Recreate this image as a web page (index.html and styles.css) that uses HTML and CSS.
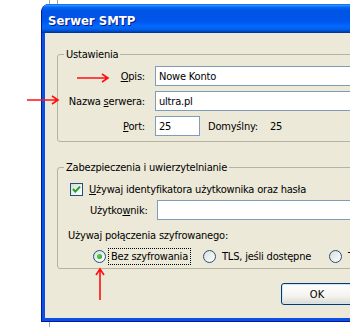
FILE: index.html
```html
<!DOCTYPE html>
<html lang="pl">
<head>
    <meta charset="UTF-8">
    <title>Serwer SMTP</title>
    <link rel="stylesheet" href="styles.css">
</head>
<body>
    <div class="backdrop-top"><div class="strip"></div></div>

    <div class="window">
        <div class="titlebar"><span class="title">Serwer SMTP</span></div>
        <div class="client">
            <fieldset class="group">
                <legend>Ustawienia</legend>
                <div class="row">
                    <label class="field-label"><u>O</u>pis:</label>
                    <input class="text-input" type="text" value="Nowe Konto">
                </div>
                <div class="row">
                    <label class="field-label">Nazwa <u>s</u>erwera:</label>
                    <input class="text-input" type="text" value="ultra.pl">
                </div>
                <div class="row">
                    <label class="field-label"><u>P</u>ort:</label>
                    <input class="text-input port" type="text" value="25">
                    <span class="default-label">Domyślny:</span>
                    <span>25</span>
                </div>
            </fieldset>

            <fieldset class="group security">
                <legend>Zabezpieczenia i uwierzytelnianie</legend>
                <div class="check-row">
                    <span class="checkbox">
                        <svg width="11" height="11" viewBox="0 0 11 11"><path d="M2 5 L4.3 7.6 L9 2.6" fill="none" stroke="#21a121" stroke-width="2"/></svg>
                    </span>
                    <span><u>U</u>żywaj identyfikatora użytkownika oraz hasła</span>
                </div>
                <div class="user-row">
                    <label class="user-label">Użytko<u>w</u>nik:</label>
                    <input class="text-input" type="text" value="">
                </div>
                <div class="enc-label">Używaj połączenia szyfrowanego:</div>
                <div class="radio-row">
                    <span class="radio checked"></span>
                    <span class="focus">Bez szyfrowania</span>
                    <span class="radio second"></span>
                    <span>TLS, jeśli dostępne</span>
                    <span class="radio third"></span>
                    <span>TLS</span>
                </div>
            </fieldset>

            <div class="actions">
                <button class="btn" type="button">OK</button>
            </div>
        </div>
    </div>

    <div class="backdrop-bottom"></div>

    <svg class="arrows" width="350" height="327" viewBox="0 0 350 327">
        <g fill="none" stroke="#ff1010" stroke-width="1.6">
            <path d="M77 78 H108 M102 74 L108 78 L102 82"/>
            <path d="M27 100 H58 M52 96 L58 100 L52 104"/>
            <path d="M100 300 V269 M96 275 L100 269 L104 275"/>
        </g>
    </svg>
</body>
</html>
```

FILE: styles.css
```css
body {
    margin: 0;
    width: 350px;
    height: 327px;
    overflow: hidden;
    position: relative;
    background: #fff;
    font-family: "DejaVu Sans Condensed", "Liberation Sans", sans-serif;
    font-size: 11px;
    letter-spacing: -0.2px;
    color: #000;
}
u {
    text-decoration: underline;
    text-underline-offset: 1px;
}
.backdrop-top {
    height: 4px;
}
.backdrop-top .strip {
    margin-left: 49px;
    width: 7px;
    height: 4px;
    border-left: 1px solid #9aa3b0;
    border-right: 1px solid #9aa3b0;
}
.backdrop-bottom {
    margin-left: 49px;
    height: 6px;
    border-left: 1px solid #9aa3b0;
}
.window {
    margin-left: 41px;
    width: 420px;
    background: #0b4fe3;
    border-left: 1px solid #0019a0;
    border-bottom: 1px solid #0019a0;
    border-radius: 8px 8px 0 0;
}
.titlebar {
    height: 29px;
    display: flex;
    align-items: center;
    padding-left: 6px;
    border-radius: 7px 7px 0 0;
    background: linear-gradient(to bottom, #0058ee 0%, #3593ff 4%, #288eff 6%, #127dff 8%, #036ffc 10%, #0262ee 14%, #0057e5 20%, #0054e3 24%, #0055eb 56%, #005bf5 66%, #026afe 76%, #0062ef 86%, #0052d6 92%, #0040ab 96%, #003092 100%);
}
.title {
    color: #fff;
    font-weight: bold;
    font-size: 13px;
    letter-spacing: 0;
    text-shadow: 1px 1px #0a1883;
    padding-top: 4px;
}
.client {
    margin: 0 0 3px 3px;
    height: 285px;
    box-sizing: border-box;
    padding: 15px 0 0 12px;
    background: #ece9d8;
}
.group {
    margin: 0;
    padding: 5px 10px 5px 6px;
    border: 1px solid #b4b2a2;
    border-radius: 3px;
}
.group legend {
    padding: 0 2px;
    line-height: 13px;
}
.row {
    display: flex;
    align-items: center;
    height: 20px;
    margin-bottom: 5px;
}
.row:last-child {
    margin-bottom: 0;
}
.field-label {
    width: 81px;
    text-align: right;
    margin-right: 10px;
}
.text-input {
    flex: 1;
    height: 20px;
    box-sizing: border-box;
    border: 1px solid #7f9db9;
    padding: 0 3px;
    font: inherit;
    letter-spacing: inherit;
    background: #fff;
    outline: none;
}
.text-input.port {
    flex: none;
    width: 45px;
}
.default-label {
    width: 62px;
    margin-left: 8px;
}
.security {
    margin-top: 19px;
    padding: 7px 10px 4px 6px;
}
.check-row {
    display: flex;
    align-items: center;
    height: 16px;
    margin-left: 6px;
}
.checkbox {
    width: 13px;
    height: 13px;
    box-sizing: border-box;
    border: 1px solid #1c5180;
    background: linear-gradient(135deg, #dcdcd7, #fff);
    margin-right: 6px;
    display: flex;
}
.user-row {
    display: flex;
    align-items: center;
    height: 20px;
    margin-top: 3px;
    margin-left: 26px;
}
.user-label {
    width: 67px;
}
.enc-label {
    margin-top: 9px;
    margin-left: 4px;
    line-height: 14px;
}
.radio-row {
    display: flex;
    align-items: center;
    height: 16px;
    margin-top: 5px;
    margin-left: 29px;
    white-space: nowrap;
}
.radio {
    flex: none;
    width: 13px;
    height: 13px;
    box-sizing: border-box;
    border: 1px solid #1c5180;
    border-radius: 50%;
    background: linear-gradient(135deg, #dcdcd7, #fff);
    display: flex;
    align-items: center;
    justify-content: center;
    margin-right: 4px;
}
.radio.checked::after {
    content: "";
    width: 5px;
    height: 5px;
    border-radius: 50%;
    background: radial-gradient(circle at 35% 35%, #55d451, #21a121);
}
.focus {
    outline: 1px dotted #000;
    outline-offset: 1px;
    padding: 0 1px;
}
.radio.second {
    margin-left: 14px;
    margin-right: 6px;
}
.radio.third {
    margin-left: 18px;
    margin-right: 6px;
}
.actions {
    margin-top: 14px;
    padding-left: 224px;
}
.btn {
    width: 72px;
    height: 22px;
    border: 1px solid #003c74;
    border-radius: 3px;
    background: linear-gradient(to bottom, #fff 0%, #f4f3ee 60%, #e3e1d6 90%, #d6d0c5 100%);
    box-shadow: inset 0 0 0 1px #cee7ff;
    font: inherit;
    letter-spacing: 0;
    padding: 0;
}
.arrows {
    position: absolute;
    left: 0;
    top: 0;
    pointer-events: none;
}
```
